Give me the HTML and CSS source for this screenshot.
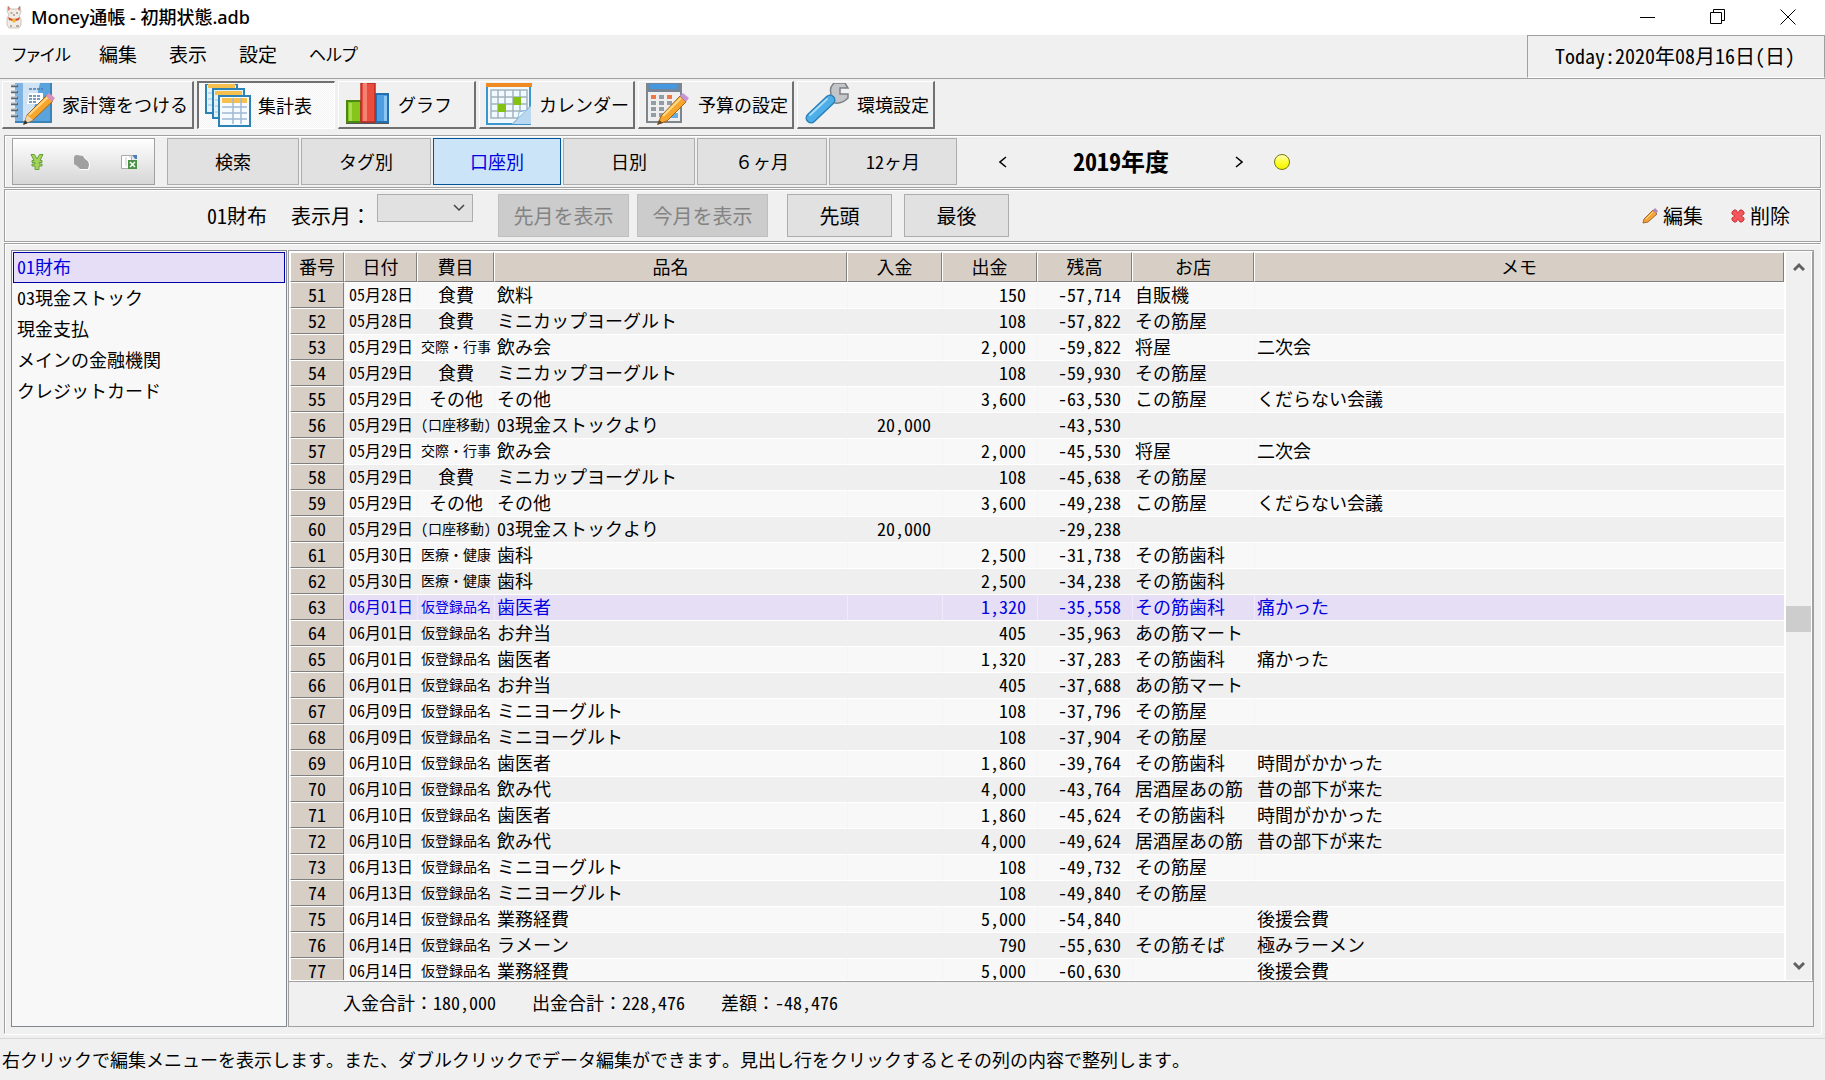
FILE: index.html
```html
<!DOCTYPE html>
<html lang="ja">
<head>
<meta charset="utf-8">
<title>Money通帳 - 初期状態.adb</title>
<link rel="stylesheet" href="styles.css">
</head>
<body>
<header class="titlebar">
  <svg class="app-icon" viewBox="0 0 18 24" aria-hidden="true">
    <path d="M3 1l3 3h6l3-3 1 6-2 4 2 3v6l-2 3H4l-2-3v-7l2-3-2-4z" fill="#f0ebe4" stroke="#c4b8ac" stroke-width=".8"/>
    <path d="M3 1l2 3-1.500 2zM15 1l-2 3 1.500 2z" fill="#d9553b"/>
    <path d="M3 12q6 4 12 0l-1 3q-5 2-10 0z" fill="#d4472c"/>
    <circle cx="9" cy="15.500" r="2" fill="#e6b93c"/>
    <path d="M5.500 8h2M11 8h2M8 10h2M5 21h2M11 21h3" stroke="#7a6a60" fill="none"/>
  </svg>
  <h1 class="title">Money通帳 - 初期状態.adb</h1>
  <div class="window-buttons">
    <button type="button" aria-label="最小化"><svg width="16" height="16"><path d="M0 8.500h15" stroke="#000"/></svg></button>
    <button type="button" aria-label="元に戻す"><svg width="16" height="16" fill="none" stroke="#000"><path d="M.5 3.500h11v11H.5zM3.500 3V.5h11v11H12"/></svg></button>
    <button type="button" aria-label="閉じる"><svg width="16" height="16"><path d="M.5.5l15 15M15.500.5l-15 15" stroke="#000"/></svg></button>
  </div>
</header>

<div class="menu-row">
  <nav class="menu">
    <button type="button" class="kana">ファイル</button>
    <button type="button">編集</button>
    <button type="button">表示</button>
    <button type="button">設定</button>
    <button type="button" class="kana">ヘルプ</button>
  </nav>
  <div class="today">Today:2020年08月16日(日)</div>
</div>

<div class="toolbar">
  <button type="button" class="tool tool-wide">
    <svg viewBox="0 0 46 43" aria-hidden="true">
      <path d="M6 0h36v39H6z" fill="#7fb4e2"/><path d="M14 0h28v38H14z" fill="#cfe3f5"/><path d="M31 0h11v38H22z" fill="#5ba3dc"/>
      <path d="M6 39h36V0" fill="none" stroke="#3c83b8" stroke-width="2"/>
      <path d="M20 10h14v11H18z" fill="#fff"/><path d="M20 6h14M20 13h12M20 16h11M20 19h8" stroke="#4d7ca8" stroke-width="1.500" stroke-dasharray="3 1"/>
      <path d="M2 3h7M2 9h7M2 15h7M2 21h7M2 27h7M2 33h7" stroke="#56687a" stroke-width="2.500"/><path d="M2 2h6M2 8h6M2 14h6M2 20h6M2 26h6M2 32h6" stroke="#d8dee4"/>
      <path d="M15 41l3-9 20-20 6 6-20 19z" fill="#f6a52d" stroke="#a2631c"/><path d="M20 32l19-18" stroke="#ffd98a" stroke-width="2"/>
      <path d="M15 41l3-9 6 5z" fill="#f1d5a8"/><path d="M14 42l2-5 3 3z" fill="#333"/><path d="M37 13l3-3 6 5-3 4z" fill="#d891bd"/>
    </svg>家計簿をつける</button>
  <button type="button" class="tool pressed" aria-pressed="true">
    <svg viewBox="0 0 46 43" aria-hidden="true">
      <path d="M1 0h31v29H1z" fill="#e3f1fb" stroke="#2d82b5" stroke-width="2"/><path d="M3 0h27v4H3z" fill="#f5c04e"/><path d="M3 9h6M3 15h6M3 21h6" stroke="#9cc3df"/>
      <path d="M8 5h31v29H8z" fill="#e3f1fb" stroke="#2d82b5" stroke-width="2"/><path d="M10 7h27v4H10z" fill="#f5c04e"/><path d="M10 16h6M10 22h6M10 28h6" stroke="#9cc3df"/>
      <path d="M14 12h31v30H14z" fill="#f5fbff" stroke="#2d82b5" stroke-width="2"/><path d="M17 14h25v5H17z" fill="#f5c04e"/>
      <path d="M17 23h25M17 29h25M17 35h25M28 14v26M36 14v26" stroke="#9fb9d6" stroke-width="1.500"/>
    </svg>集計表</button>
  <button type="button" class="tool">
    <svg viewBox="0 0 46 43" aria-hidden="true">
      <path d="M1 40h43" stroke="#555" stroke-width="2"/><path d="M2 18h14v21H2z" fill="#86c51c" stroke="#4b8713" stroke-width="2"/><path d="M4 20h3v18H4z" fill="#add95b"/>
      <path d="M31 11h12v28H31z" fill="#4d9de0" stroke="#246fae" stroke-width="2"/><path d="M39 13h3v25h-3z" fill="#8cc7f3"/>
      <path d="M16 0h14v39H16z" fill="#e84d3d" stroke="#b92c24" stroke-width="1.500"/><path d="M18 0h4v38h-4z" fill="#f48171"/>
    </svg>グラフ</button>
  <button type="button" class="tool tool-mid">
    <svg viewBox="0 0 46 43" aria-hidden="true">
      <path d="M1 0h43v41H1z" fill="#f0f9ff" stroke="#3a96cd" stroke-width="2"/><path d="M0 0h46v4H0z" fill="#ef8a22"/>
      <path d="M5 7h36v28H5zM5 14h36M5 21h36M5 28h36M12 7v28M19 7v28M27 7v28M34 7v28" fill="none" stroke="#a2b2bd" stroke-width="1.500"/>
      <path d="M12 21h8v8h-8zM27 14h8v8h-8z" fill="#83c112"/>
      <path d="M26 41q7-4 7-12 7 0 12-6v18z" fill="#bad8ef"/><path d="M26 41q7-4 7-12 7 0 12-6z" fill="#f6fbff" stroke="#84b9dd"/>
    </svg>カレンダー</button>
  <button type="button" class="tool tool-mid">
    <svg viewBox="0 0 46 43" aria-hidden="true">
      <path d="M2 0h34v39H2z" fill="#eee" stroke="#7e858c" stroke-width="2"/><path d="M2 0h34v9H2z" fill="#778596"/><path d="M5 1h27v5H5z" fill="#4598df"/>
      <g fill="#929ca5"><path d="M6 18h5v4H6zM14 18h5v4h-5zM22 18h5v4h-5zM6 24h5v4H6zM14 24h5v4h-5zM6 30h5v4H6zM14 30h5v4h-5zM14 12h5v4h-5z"/></g>
      <path d="M6 12h5v4H6zM22 12h5v4h-5z" fill="#ef7645"/><path d="M26 30h7v5h-7z" fill="#68aee5"/>
      <path d="M13 41l3-8 19-20 6 6-19 19z" fill="#f6a52d" stroke="#a2631c"/><path d="M18 33l18-18" stroke="#ffd98a" stroke-width="2"/>
      <path d="M12 42l2-5 4 3z" fill="#65482a"/><path d="M35 13l3-3 6 5-3 4z" fill="#c994d5"/>
    </svg>予算の設定</button>
  <button type="button" class="tool">
    <svg viewBox="0 0 46 43" aria-hidden="true">
      <path d="M26 14l5 6q7 1 13-5V11h-8V5h8L41 0H30q-5 5-3 10z" fill="#c3c5c8" stroke="#7d8186" stroke-width="1.500"/>
      <path d="M7 35L26 17" stroke="#287fb9" stroke-width="11" stroke-linecap="round"/><path d="M7 35L26 17" stroke="#4eafe8" stroke-width="8" stroke-linecap="round"/><path d="M6 32l17-16" stroke="#a6dbfa" stroke-width="2" stroke-linecap="round"/>
    </svg>環境設定</button>
</div>

<section class="panel period">
  <div class="quick">
    <button type="button" aria-label="円"><svg width="14" height="16" viewBox="0 0 14 16"><path d="M1 .5h3.500L7 5 9.500.5H13L10 6.500h2v2H9v1.500h3v2H9v3.500H5V12H2v-2h3V8.500H2v-2h2z" fill="#a6d35a" stroke="#67a03c"/></svg></button>
    <button type="button" aria-label="タグ" disabled><svg width="18" height="16" viewBox="0 0 18 16"><path d="M2 4q0-3 3-3l6 1 2 3q4 2 4 6l-1 5H7l-3-4-2-2z" fill="#fff"/><path d="M1 4q0-3 3-3l6 1 2 3q4 2 4 6l-1 4H7l-3-3-3-2z" fill="#a0a0a0"/></svg></button>
    <button type="button" aria-label="Excelへ出力"><svg width="18" height="16" viewBox="0 0 18 16"><path d="M1.500 1.500h10v13h-10z" fill="#fff" stroke="#aaa"/><path d="M12 1h5v4h-2z" fill="#4f7db5"/><path d="M9 3h4M6 3v9" stroke="#ccc"/><path d="M8 6h9v9H8z" fill="#4a9148"/><path d="M10 8l5 5M15 8l-5 5" stroke="#fff" stroke-width="1.500"/></svg></button>
  </div>
  <div class="tabs">
    <button type="button">検索</button>
    <button type="button">タグ別</button>
    <button type="button" class="active" aria-pressed="true">口座別</button>
    <button type="button">日別</button>
    <button type="button">６ヶ月</button>
    <button type="button">12ヶ月</button>
  </div>
  <div class="year">
    <button type="button" aria-label="前年度"><svg width="8" height="12"><path d="M7 1L1 6l6 5" fill="none" stroke="#000" stroke-width="1.500"/></svg></button>
    <strong>2019年度</strong>
    <button type="button" aria-label="次年度"><svg width="8" height="12"><path d="M1 1l6 5-6 5" fill="none" stroke="#000" stroke-width="1.500"/></svg></button>
  </div>
  <span class="lamp"></span>
</section>

<section class="panel filter">
  <span class="account">01財布</span>
  <label for="month">表示月：</label>
  <div class="select-wrap">
    <select id="month"><option></option></select>
    <svg width="12" height="8"><path d="M1 1l5 5 5-5" fill="none" stroke="#444" stroke-width="1.500"/></svg>
  </div>
  <div class="pair">
    <button type="button" class="btn btn-wide" disabled>先月を表示</button>
    <button type="button" class="btn btn-wide" disabled>今月を表示</button>
  </div>
  <div class="pair pair-loose">
    <button type="button" class="btn">先頭</button>
    <button type="button" class="btn">最後</button>
  </div>
  <div class="edit">
    <button type="button"><svg width="16" height="16" viewBox="0 0 16 16"><path d="M1 15l1-4 9-9 4 4-9 8z" fill="#f5a536" stroke="#a4682c"/><path d="M4 11l7-7" stroke="#ffdc91"/><path d="M11 2l2-2 3 3-2 3z" fill="#b08bc0"/></svg>編集</button>
    <button type="button"><svg width="14" height="14" viewBox="0 0 14 14"><path d="M1 3l2-2h2l2 3 2-3h2l2 2v2l-3 2 3 2v2l-2 2H9l-2-3-2 3H3l-2-2V9l3-2-3-2z" fill="#f4575b" stroke="#cc3338"/></svg>削除</button>
  </div>
</section>

<main class="panel content">
  <ul class="accounts">
    <li class="selected">01財布</li>
    <li>03現金ストック</li>
    <li>現金支払</li>
    <li>メインの金融機関</li>
    <li>クレジットカード</li>
  </ul>
  <section class="ledger">
    <div class="grid-area">
      <div class="grid-scroll">
        <table>
          <colgroup><col class="c-no"><col class="c-date"><col class="c-cat"><col class="c-item"><col class="c-num"><col class="c-num"><col class="c-num"><col class="c-shop"><col></colgroup>
          <thead><tr><th>番号</th><th>日付</th><th>費目</th><th>品名</th><th>入金</th><th>出金</th><th>残高</th><th>お店</th><th>メモ</th></tr></thead>
          <tbody>
            <tr><th>51<td>05月28日<td>食費<td>飲料<td><td>150<td>-57,714<td>自販機<td></tr>
            <tr><th>52<td>05月28日<td>食費<td>ミニカップヨーグルト<td><td>108<td>-57,822<td>その筋屋<td></tr>
            <tr><th>53<td>05月29日<td class="long">交際・行事<td>飲み会<td><td>2,000<td>-59,822<td>将屋<td>二次会</tr>
            <tr><th>54<td>05月29日<td>食費<td>ミニカップヨーグルト<td><td>108<td>-59,930<td>その筋屋<td></tr>
            <tr><th>55<td>05月29日<td>その他<td>その他<td><td>3,600<td>-63,530<td>この筋屋<td>くだらない会議</tr>
            <tr><th>56<td>05月29日<td class="long">(口座移動)<td>03現金ストックより<td>20,000<td><td>-43,530<td><td></tr>
            <tr><th>57<td>05月29日<td class="long">交際・行事<td>飲み会<td><td>2,000<td>-45,530<td>将屋<td>二次会</tr>
            <tr><th>58<td>05月29日<td>食費<td>ミニカップヨーグルト<td><td>108<td>-45,638<td>その筋屋<td></tr>
            <tr><th>59<td>05月29日<td>その他<td>その他<td><td>3,600<td>-49,238<td>この筋屋<td>くだらない会議</tr>
            <tr><th>60<td>05月29日<td class="long">(口座移動)<td>03現金ストックより<td>20,000<td><td>-29,238<td><td></tr>
            <tr><th>61<td>05月30日<td class="long">医療・健康<td>歯科<td><td>2,500<td>-31,738<td>その筋歯科<td></tr>
            <tr><th>62<td>05月30日<td class="long">医療・健康<td>歯科<td><td>2,500<td>-34,238<td>その筋歯科<td></tr>
            <tr class="current"><th>63<td>06月01日<td class="long">仮登録品名<td>歯医者<td><td>1,320<td>-35,558<td>その筋歯科<td>痛かった</tr>
            <tr><th>64<td>06月01日<td class="long">仮登録品名<td>お弁当<td><td>405<td>-35,963<td>あの筋マート<td></tr>
            <tr><th>65<td>06月01日<td class="long">仮登録品名<td>歯医者<td><td>1,320<td>-37,283<td>その筋歯科<td>痛かった</tr>
            <tr><th>66<td>06月01日<td class="long">仮登録品名<td>お弁当<td><td>405<td>-37,688<td>あの筋マート<td></tr>
            <tr><th>67<td>06月09日<td class="long">仮登録品名<td>ミニヨーグルト<td><td>108<td>-37,796<td>その筋屋<td></tr>
            <tr><th>68<td>06月09日<td class="long">仮登録品名<td>ミニヨーグルト<td><td>108<td>-37,904<td>その筋屋<td></tr>
            <tr><th>69<td>06月10日<td class="long">仮登録品名<td>歯医者<td><td>1,860<td>-39,764<td>その筋歯科<td>時間がかかった</tr>
            <tr><th>70<td>06月10日<td class="long">仮登録品名<td>飲み代<td><td>4,000<td>-43,764<td>居酒屋あの筋<td>昔の部下が来た</tr>
            <tr><th>71<td>06月10日<td class="long">仮登録品名<td>歯医者<td><td>1,860<td>-45,624<td>その筋歯科<td>時間がかかった</tr>
            <tr><th>72<td>06月10日<td class="long">仮登録品名<td>飲み代<td><td>4,000<td>-49,624<td>居酒屋あの筋<td>昔の部下が来た</tr>
            <tr><th>73<td>06月13日<td class="long">仮登録品名<td>ミニヨーグルト<td><td>108<td>-49,732<td>その筋屋<td></tr>
            <tr><th>74<td>06月13日<td class="long">仮登録品名<td>ミニヨーグルト<td><td>108<td>-49,840<td>その筋屋<td></tr>
            <tr><th>75<td>06月14日<td class="long">仮登録品名<td>業務経費<td><td>5,000<td>-54,840<td><td>後援会費</tr>
            <tr><th>76<td>06月14日<td class="long">仮登録品名<td>ラメーン<td><td>790<td>-55,630<td>その筋そば<td>極みラーメン</tr>
            <tr><th>77<td>06月14日<td class="long">仮登録品名<td>業務経費<td><td>5,000<td>-60,630<td><td>後援会費</tr>
          </tbody>
        </table>
      </div>
      <div class="scrollbar" aria-hidden="true">
        <svg width="12" height="10"><path d="M1 8l5-5 5 5" fill="none" stroke="#606060" stroke-width="3"/></svg>
        <div class="track"><div class="gap-before"></div><div class="thumb"></div><div class="gap-after"></div></div>
        <svg width="12" height="10"><path d="M1 2l5 5 5-5" fill="none" stroke="#606060" stroke-width="3"/></svg>
      </div>
    </div>
    <div class="totals"><span>入金合計：180,000</span><span>出金合計：228,476</span><span>差額：-48,476</span></div>
  </section>
</main>

<footer class="status">右クリックで編集メニューを表示します。また、ダブルクリックでデータ編集ができます。見出し行をクリックするとその列の内容で整列します。</footer>
</body>
</html>
```

FILE: styles.css
```css
* { box-sizing: border-box; }

body {
  margin: 0;
  height: 100vh;
  display: flex;
  flex-direction: column;
  overflow: hidden;
  background: #f0f0f0;
  color: #000;
  font: 18px/24px "Noto Sans Mono CJK JP", "Noto Sans CJK JP", sans-serif;
  white-space: nowrap;
}

button, select { font: inherit; color: inherit; margin: 0; padding: 0; border: 0; border-radius: 0; background: none; }
svg { display: block; flex: none; }

/* Title bar */
.titlebar { display: flex; align-items: flex-start; height: 35px; padding: 5px 2px 0 5px; background: #fff; flex: none; }
.app-icon { width: 18px; height: 24px; }
.title { margin: 0 0 0 8px; flex: 1; font: 500 18px/24px "Noto Sans", "Noto Sans CJK JP", sans-serif; }
.window-buttons { display: flex; }
.window-buttons button { width: 70px; height: 24px; display: flex; align-items: center; justify-content: center; }

/* Menu */
.menu-row { display: flex; height: 44px; border-bottom: 1px solid #a0a0a0; flex: none; }
.menu { display: flex; flex: 1; align-items: flex-start; padding-top: 6px; }
.menu button { padding: 0 16px; font: 19px/26px "Noto Sans CJK JP", sans-serif; font-feature-settings: "palt"; }
.menu .kana { font-size: 17px; }
.menu button:first-child { padding: 0 12px; }
.today { width: 298px; border: 1px solid #a0a0a0; border-bottom-color: #fff; padding-right: 2px; text-align: center; font-size: 20px; line-height: 39px; }

/* Tool buttons */
.toolbar { display: flex; gap: 3px; height: 56px; padding: 2px 2px 6px; flex: none; }
.tool { display: flex; align-items: center; width: 138px; padding-left: 6px; gap: 7px; line-height: 43px; border: 1px solid #fff; border-right: 2px solid #707070; border-bottom: 2px solid #707070; }
.tool svg { width: 46px; height: 43px; }
.tool-wide { width: 192px; }
.tool-mid { width: 156px; }
.pressed { border: 1px solid #fff; border-top: 2px solid #707070; border-left: 2px solid #707070; background: repeating-conic-gradient(#fff 0 25%, #f3f3f3 0 50%) 0 0 / 2px 2px; }

/* Panels */
.panel { margin: 0 4px; border: 1px solid #a0a0a0; box-shadow: inset 1px 1px #fff, 0 1px #fff, 1px 0 #fff; flex: none; }
.period { display: flex; height: 53px; padding: 2px 7px; margin-bottom: 1px; }
.quick { display: flex; align-items: center; justify-content: space-around; width: 143px; padding: 0 2px; border: 1px solid #a0a0a0; background: linear-gradient(#fff, #d6d6d6); }
.quick button { padding: 0 12px; }
.tabs { display: flex; gap: 2px; margin-left: 12px; }
.tabs button { width: 130px; border: 1px solid #adadad; background: #e1e1e1; padding-bottom: 2px; }
.tabs button:nth-child(3n + 1) { width: 132px; }
.tabs button:nth-child(3n) { width: 128px; }
.tabs .active { border-color: #005499; background: #cce4f7; color: #0000e0; }
.year { display: flex; align-items: center; justify-content: space-between; width: 244px; margin-left: 42px; }
.year strong { font-size: 24px; line-height: 32px; font-weight: 700; padding-bottom: 2px; }
.lamp { width: 16px; height: 16px; margin-left: 31px; align-self: center; border: 1px solid #77770a; border-radius: 50%; background: linear-gradient(#fffec0, #ffff30 50%, #f2f200); }

.filter { display: flex; height: 53px; padding: 4px 0; font-size: 20px; line-height: 44px; margin-bottom: 1px; }
.account { margin-left: 202px; }
.filter label { margin-left: 24px; }
.select-wrap { display: grid; align-self: flex-start; width: 96px; margin-left: 6px; }
.select-wrap select { grid-area: 1 / 1; height: 28px; appearance: none; border: 1px solid #adadad; background: #e1e1e1; }
.select-wrap svg { grid-area: 1 / 1; place-self: center end; margin-right: 8px; pointer-events: none; }
.pair { display: flex; gap: 8px; margin-left: 25px; }
.pair-loose { gap: 12px; margin-left: 19px; }
.btn { width: 105px; border: 1px solid #adadad; background: #e1e1e1; line-height: 40px; }
.btn-wide { width: 131px; }
.btn:disabled { border-color: #bfbfbf; background: #ccc; color: #838383; }
.edit { display: flex; gap: 28px; margin-left: auto; padding-right: 30px; }
.edit button { display: flex; align-items: center; gap: 5px; }

/* Account list and ledger */
.content { display: flex; flex: 1; min-height: 0; padding: 6px; gap: 1px; margin-bottom: 4px; border-bottom-color: #f0f0f0; border-right-color: #f0f0f0; }
.accounts { width: 276px; margin: 0; padding: 1px; list-style: none; border: 1px solid #828790; background: #f8f8f8; flex: none; }
.accounts li { height: 31px; padding: 0 4px; line-height: 29px; }
.accounts .selected { border: 1px solid #0000a8; padding: 0 3px; line-height: 27px; background: #e6def7; color: #0000e0; }
.ledger { display: flex; flex-direction: column; flex: 1; min-width: 0; border: 1px solid #a0a0a0; }
.grid-area { display: flex; flex: 1; min-height: 0; border: 1px solid #fff; border-right: 1px solid #a0a0a0; }
.grid-scroll { flex: 1; min-width: 0; overflow: hidden; }

table { width: 100%; table-layout: fixed; border-collapse: separate; border-spacing: 0; }
.c-no { width: 54px; }
.c-date { width: 73px; }
.c-cat { width: 77px; }
.c-item { width: 353px; }
.c-num { width: 95px; }
.c-shop { width: 122px; }
th, td { vertical-align: top; }
th { padding: 0; font-weight: 400; background: #d7cec6; border: 1px solid #fff; border-right-color: #808080; border-bottom-color: #808080; }
thead th { height: 30px; line-height: 26px; }
tbody th, td { height: 26px; line-height: 22px; }
td { padding: 0 1px; border: 1px solid #fff; border-width: 1px 0 0 1px; border-left-color: #f4f4f4; background: #f8f8f8; }
tr:nth-child(even) td { background: #efefef; border-left-color: #efefef; }
td:nth-child(2) { font-size: 16px; text-align: center; }
td:nth-child(3) { text-align: center; }
td:nth-child(4), td:nth-child(8), td:nth-child(9) { padding-left: 2px; }
td:nth-child(5), td:nth-child(6), td:nth-child(7) { text-align: right; padding-right: 11px; }
td.long { font-size: 14px; }
tr.current td { background: #e6def5; border-left-color: #f0eafa; color: #0000e0; }

.scrollbar { display: flex; flex-direction: column; align-items: center; width: 28px; padding: 10px 0 9px; border-left: 2px solid #fff; border-right: 1px solid #fff; flex: none; }
.track { display: flex; flex-direction: column; flex: 1; align-self: stretch; }
.gap-before { flex: 332; }
.gap-after { flex: 328; }
.thumb { height: 26px; background: #cdcdcd; }

.totals { display: flex; gap: 36px; height: 45px; padding-left: 54px; line-height: 40px; border-top: 1px solid #a0a0a0; flex: none; }

.status { height: 42px; padding-left: 2px; line-height: 40px; border-top: 1px solid #d7d7d7; flex: none; }
```
